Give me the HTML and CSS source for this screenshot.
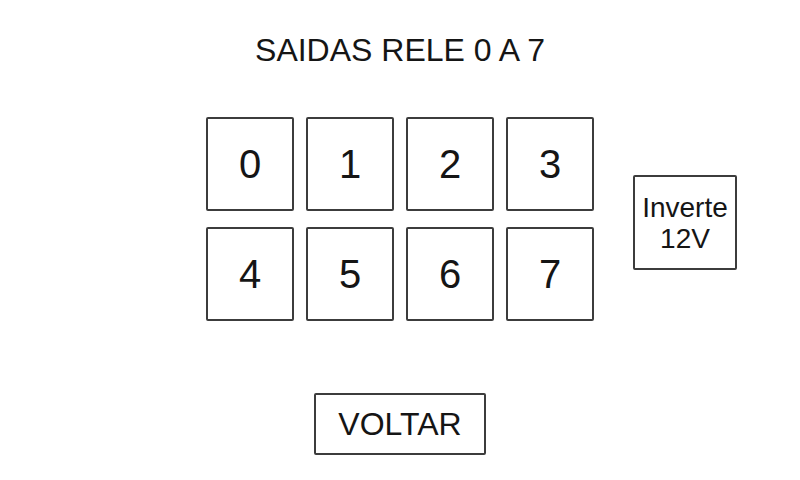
FILE: index.html
```html
<!DOCTYPE html>
<html lang="pt">
<head>
    <meta charset="UTF-8">
    <meta name="viewport" content="width=device-width, initial-scale=1.0">
    <title>Saidas Rele</title>
    <link rel="stylesheet" href="styles.css">
</head>
<body>
    <h1 class="title">SAIDAS RELE 0 A 7</h1>

    <div class="panel">
        <div class="relay-grid">
            <button class="relay-btn">0</button>
            <button class="relay-btn">1</button>
            <button class="relay-btn">2</button>
            <button class="relay-btn">3</button>
            <button class="relay-btn">4</button>
            <button class="relay-btn">5</button>
            <button class="relay-btn">6</button>
            <button class="relay-btn">7</button>
        </div>
        <button class="invert-btn">Inverte<br>12V</button>
    </div>

    <button class="back-btn">VOLTAR</button>
</body>
</html>
```

FILE: styles.css
```css
* {
    margin: 0;
    padding: 0;
    box-sizing: border-box;
}

body {
    font-family: "Liberation Sans", Arial, sans-serif;
    background: #fff;
    color: #151515;
    width: 800px;
    height: 480px;
    display: flex;
    flex-direction: column;
    align-items: center;
}

button {
    font-family: inherit;
    color: #151515;
    background: #fff;
    border: 2px solid #3c3c3c;
    border-radius: 2px;
    display: flex;
    align-items: center;
    justify-content: center;
}

/* Title */
.title {
    font-size: 32px;
    font-weight: normal;
    line-height: 32px;
    margin-top: 34px;
}

/* Relay buttons + invert */
.panel {
    width: 100%;
    display: grid;
    grid-template-columns: 1fr auto 1fr;
    align-items: center;
    margin-top: 51px;
}

.relay-grid {
    grid-column: 2;
    display: grid;
    grid-template-columns: repeat(4, 88px);
    grid-template-rows: repeat(2, 94px);
    gap: 16px 12px;
}

.relay-btn {
    font-size: 40px;
}

.invert-btn {
    grid-column: 3;
    justify-self: start;
    width: 104px;
    height: 95px;
    margin-left: 39px;
    margin-top: 7px;
    font-size: 28px;
    line-height: 31px;
    text-align: center;
}

/* Back */
.back-btn {
    width: 172px;
    height: 62px;
    margin-top: 72px;
    font-size: 32px;
}
```
